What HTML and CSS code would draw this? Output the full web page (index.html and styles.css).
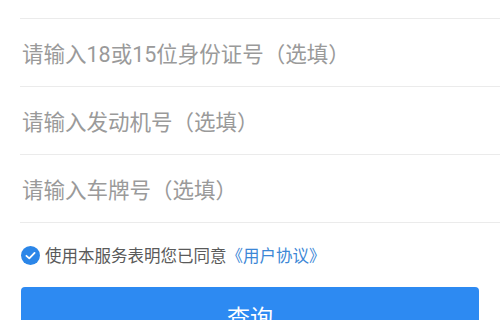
FILE: index.html
```html
<!DOCTYPE html>
<html>
<head>
<meta charset="utf-8">
<link rel="stylesheet" href="styles.css">
</head>
<body>
<div class="form">
  <div class="row row-top"></div>
  <div class="row"><span class="ph">请输入18或15位身份证号（选填）</span></div>
  <div class="row"><span class="ph">请输入发动机号（选填）</span></div>
  <div class="row"><span class="ph">请输入车牌号（选填）</span></div>
</div>
<div class="agree">
  <span class="check">
    <svg width="19" height="19" viewBox="0 0 19 19"><circle cx="9.5" cy="9.5" r="9.5" fill="#2b86e8"/><path d="M5.4 9.8 L8.3 12.4 L13.6 6.9" fill="none" stroke="#fff" stroke-width="1.8" stroke-linecap="round" stroke-linejoin="round"/></svg>
  </span>
  <span class="agree-text">使用本服务表明您已同意</span><span class="link">《用户协议》</span>
</div>
<div class="btn-wrap">
  <div class="btn">查询</div>
</div>
</body>
</html>
```
FILE: styles.css
```css
html, body {
  margin: 0;
  padding: 0;
  background: #ffffff;
  font-family: Roboto, "Noto Sans CJK SC", sans-serif;
  overflow: hidden;
}
.form {
  padding-left: 20px;
}
.row {
  height: 67px;
  border-bottom: 1px solid #ebebeb;
  display: flex;
  align-items: center;
  padding-left: 2px;
}
.row-top {
  height: 18px;
}
.ph {
  font-size: 21.5px;
  color: #9a9a9a;
}
.agree {
  display: flex;
  align-items: center;
  height: 24px;
  margin-top: 20px;
  padding-left: 21px;
}
.check {
  display: flex;
  width: 19px;
  height: 19px;
  margin-right: 5px;
}
.agree-text {
  font-size: 16.5px;
  color: #5a5a5a;
}
.link {
  font-size: 16.5px;
  color: #3c87d6;
}
.btn-wrap {
  padding: 0 21px;
  margin-top: 20px;
}
.btn {
  height: 50px;
  background: #2d8af2;
  border-radius: 4px;
  color: #ffffff;
  font-size: 23px;
  display: flex;
  align-items: center;
  justify-content: center;
  padding-top: 8px;
  box-sizing: border-box;
}
```
